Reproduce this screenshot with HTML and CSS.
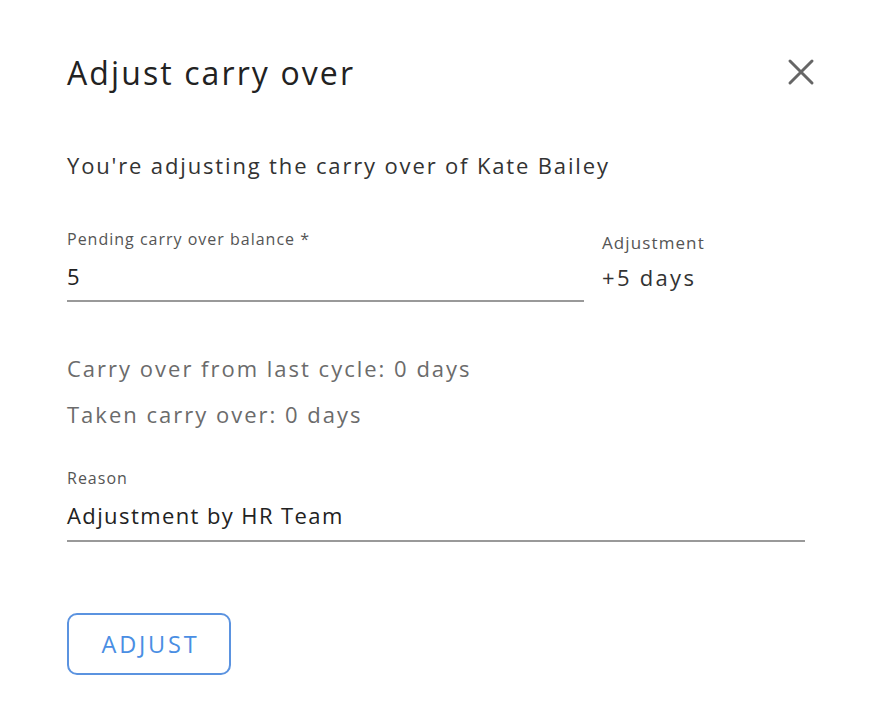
FILE: index.html
```html
<!DOCTYPE html>
<html>
<head>
<meta charset="utf-8">
<link rel="stylesheet" href="styles.css">
</head>
<body>
<div class="dialog">
  <header class="head">
    <h1 class="title">Adjust carry over</h1>
    <button class="close" aria-label="Close">
      <svg width="28" height="28" viewBox="0 0 28 28"><path d="M3 3 L25 25 M25 3 L3 25" stroke="#666" stroke-width="3" stroke-linecap="round" fill="none"/></svg>
    </button>
  </header>
  <p class="intro">You're adjusting the carry over of Kate Bailey</p>
  <div class="row">
    <div class="field grow">
      <label class="label">Pending carry over balance *</label>
      <div class="input">5</div>
    </div>
    <div class="adj">
      <div class="adj-label">Adjustment</div>
      <div class="adj-value">+5 days</div>
    </div>
  </div>
  <div class="info">
    <p class="muted">Carry over from last cycle: 0 days</p>
    <p class="muted">Taken carry over: 0 days</p>
  </div>
  <div class="field reason">
    <label class="label">Reason</label>
    <div class="input">Adjustment by HR Team</div>
  </div>
  <button class="btn">ADJUST</button>
</div>
</body>
</html>
```
FILE: styles.css
```css
html, body { margin: 0; padding: 0; background: #fff; }
body { font-family: "Open Sans", "Lato", sans-serif; color: #222; }
.dialog { padding: 48px 81px 0 67px; }
.head { display: flex; justify-content: space-between; align-items: center; height: 48px; }
.title { margin: 0; font-size: 32px; font-weight: 400; color: #222; letter-spacing: 2.1px; }
.close { background: none; border: 0; padding: 0; margin-right: -10px; width: 28px; height: 28px; display: flex; }
.intro { margin: 54px 0 0; font-size: 22px; color: #333; letter-spacing: 1.85px; line-height: 30px; }
.row { display: flex; align-items: flex-start; margin-top: 49px; }
.grow { width: 517px; }
.field { display: flex; flex-direction: column; }
.label { font-size: 16px; color: #555; line-height: 20px; letter-spacing: 1px; }
.input { font-size: 22px; color: #222; line-height: 30px; margin-top: 12px; padding-bottom: 9px; border-bottom: 2px solid #999; letter-spacing: 1.4px; }
.adj { margin-left: 18px; margin-top: 4px; }
.adj-label { font-size: 17px; color: #555; line-height: 20px; letter-spacing: 1.1px; }
.adj-value { font-size: 22px; color: #333; line-height: 30px; margin-top: 9px; letter-spacing: 2.3px; }
.info { margin-top: 51px; }
.muted { margin: 0 0 16px; font-size: 22px; color: #6b6b6b; line-height: 30px; letter-spacing: 2px; }
.reason { margin-top: 39px; width: 738px; }
.reason .input { padding-bottom: 10px; }
.btn { margin-top: 71px; width: 164px; height: 62px; padding: 0 0 0 3px; border: 2px solid #5b93e0; border-radius: 10px; background: #fff; color: #4a8ee3; font-family: "Open Sans", sans-serif; font-size: 23.5px; letter-spacing: 2.8px; }
```
